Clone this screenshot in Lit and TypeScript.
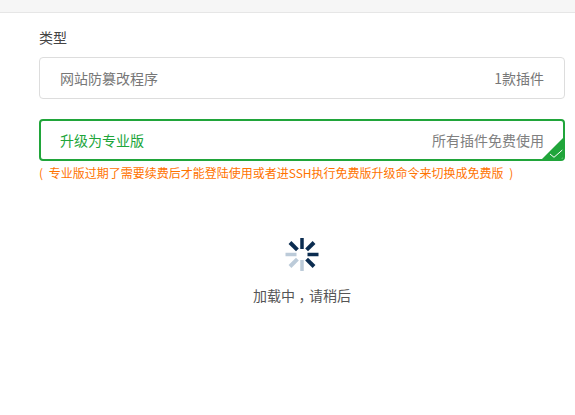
import { LitElement, html, css, svg } from "lit";
import { customElement } from "lit/decorators.js";

const spokes = [
  { a: 0, c: "#0b2c50" },
  { a: 45, c: "#0b2c50" },
  { a: 90, c: "#0b2c50" },
  { a: 135, c: "#0b2c50" },
  { a: 180, c: "#bccbd9" },
  { a: 225, c: "#bccbd9" },
  { a: 270, c: "#bccbd9" },
  { a: 315, c: "#0b2c50" },
];

@customElement("app-root")
export class AppRoot extends LitElement {
  static styles = css`
    :host {
      display: block;
      width: 575px;
      height: 415px;
      overflow: hidden;
      background: #fff;
      font-family: "Noto Sans CJK SC", "Liberation Sans", sans-serif;
      font-size: 14px;
      color: #555;
    }
    .top {
      height: 12px;
      background: #f6f6f6;
      border-bottom: 1px solid #e6e6e6;
    }
    .content {
      padding: 0 10px 0 39px;
      display: flex;
      flex-direction: column;
    }
    .label {
      margin-top: 14px;
      height: 20px;
      line-height: 20px;
      color: #444;
    }
    .card {
      box-sizing: border-box;
      height: 42px;
      display: flex;
      align-items: center;
      justify-content: space-between;
      padding: 0 20px;
      border: 1px solid #ddd;
      border-radius: 4px;
      color: #777;
      position: relative;
      overflow: hidden;
    }
    .type {
      margin-top: 10px;
    }
    .pro {
      margin-top: 20px;
      border: 2px solid #20a53a;
      padding: 0 19px;
    }
    .pro .name {
      color: #20a53a;
    }
    .pro .desc {
      color: #808080;
    }
    .corner {
      position: absolute;
      right: -1px;
      bottom: -1px;
      width: 23px;
      height: 23px;
      display: block;
    }
    .note {
      margin-top: 3px;
      height: 18px;
      line-height: 18px;
      font-size: 12px;
      color: #ff7300;
      white-space: nowrap;
      word-spacing: 3px;
    }
    .loader {
      margin-top: 54px;
      display: flex;
      flex-direction: column;
      align-items: center;
    }
    .spin {
      width: 36px;
      height: 36px;
      display: block;
    }
    .loading {
      margin-top: 13px;
      line-height: 20px;
      color: #555;
    }
    .comma {
      font-feature-settings: "halt";
      padding: 0 3.5px;
    }
  `;

  render() {
    return html`
      <div class="top"></div>
      <div class="content">
        <div class="label">类型</div>
        <div class="card type">
          <span>网站防篡改程序</span>
          <span>1款插件</span>
        </div>
        <div class="card pro">
          <span class="name">升级为专业版</span>
          <span class="desc">所有插件免费使用</span>
          <svg class="corner" viewBox="0 0 23 23">
            <path d="M23 0V23H0Z" fill="#20a53a"></path>
            <path d="M9 17l4 3.3 8.3-7.3" fill="none" stroke="#fff" stroke-width="1"></path>
          </svg>
        </div>
        <div class="note">( 专业版过期了需要续费后才能登陆使用或者进SSH执行免费版升级命令来切换成免费版 )</div>
        <div class="loader">
          <svg class="spin" viewBox="0 0 36 36">
            ${spokes.map((s) => {
              const diag = s.a % 90 !== 0;
              return svg`<line x1="18" y1=${diag ? 12 : 13} x2="18" y2=${diag ? 1.5 : 2} stroke=${s.c} stroke-width=${diag ? 4 : 3.5} transform="rotate(${s.a} 18 18.5)"></line>`;
            })}
          </svg>
          <div class="loading">加载中<span class="comma">，</span>请稍后</div>
        </div>
      </div>
    `;
  }
}
